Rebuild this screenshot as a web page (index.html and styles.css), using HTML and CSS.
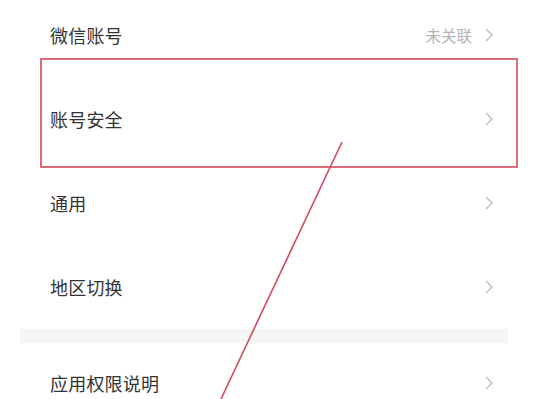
FILE: index.html
```html
<!DOCTYPE html>
<html lang="zh-CN">
<head>
<meta charset="utf-8">
<link rel="stylesheet" href="styles.css">
</head>
<body>
<div class="page">
  <ul class="list">
    <li class="row"><span class="label">微信账号</span><span class="right"><span class="value">未关联</span><svg class="chev" viewBox="0 0 8 14"><polyline points="1,1 7,7 1,13"/></svg></span></li>
    <li class="row"><span class="label">账号安全</span><span class="right"><svg class="chev" viewBox="0 0 8 14"><polyline points="1,1 7,7 1,13"/></svg></span></li>
    <li class="row"><span class="label">通用</span><span class="right"><svg class="chev" viewBox="0 0 8 14"><polyline points="1,1 7,7 1,13"/></svg></span></li>
    <li class="row"><span class="label">地区切换</span><span class="right"><svg class="chev" viewBox="0 0 8 14"><polyline points="1,1 7,7 1,13"/></svg></span></li>
  </ul>
  <div class="band"></div>
  <ul class="list list-second">
    <li class="row"><span class="label">应用权限说明</span><span class="right"><svg class="chev" viewBox="0 0 8 14"><polyline points="1,1 7,7 1,13"/></svg></span></li>
  </ul>
  <div class="highlight"></div>
  <svg class="arrow" viewBox="0 0 535 399"><line x1="342" y1="142" x2="221" y2="399"/></svg>
</div>
</body>
</html>
```
FILE: styles.css
```css
html, body {
  margin: 0;
  padding: 0;
  background: #ffffff;
}
.page {
  position: relative;
  width: 535px;
  height: 399px;
  overflow: hidden;
  font-family: "Noto Sans CJK SC", "Noto Sans", sans-serif;
}
.list {
  list-style: none;
  margin: 0;
  padding: 0;
}
.list:first-child {
  margin-top: -7px;
}
.row {
  display: flex;
  align-items: center;
  justify-content: space-between;
  height: 84px;
  padding: 0 42px 0 50px;
}
.list-second .row {
  height: 80px;
}
.label {
  font-size: 18px;
  color: #333333;
  letter-spacing: 0.2px;
}
.right {
  display: flex;
  align-items: center;
  gap: 13px;
}
.value {
  font-size: 15.5px;
  color: #b4b4b4;
}
.chev {
  width: 8px;
  height: 14px;
  fill: none;
  stroke: #bdbdbd;
  stroke-width: 1.4;
}
.band {
  height: 14px;
  margin: 0 27px 0 20px;
  background: #f6f6f6;
}
.highlight {
  position: absolute;
  left: 40px;
  top: 58px;
  width: 474px;
  height: 106px;
  border: 2px solid #d86b77;
}
.arrow {
  position: absolute;
  left: 0;
  top: 0;
  width: 535px;
  height: 399px;
}
.arrow line {
  stroke: #d04a60;
  stroke-width: 1.6;
}
```
